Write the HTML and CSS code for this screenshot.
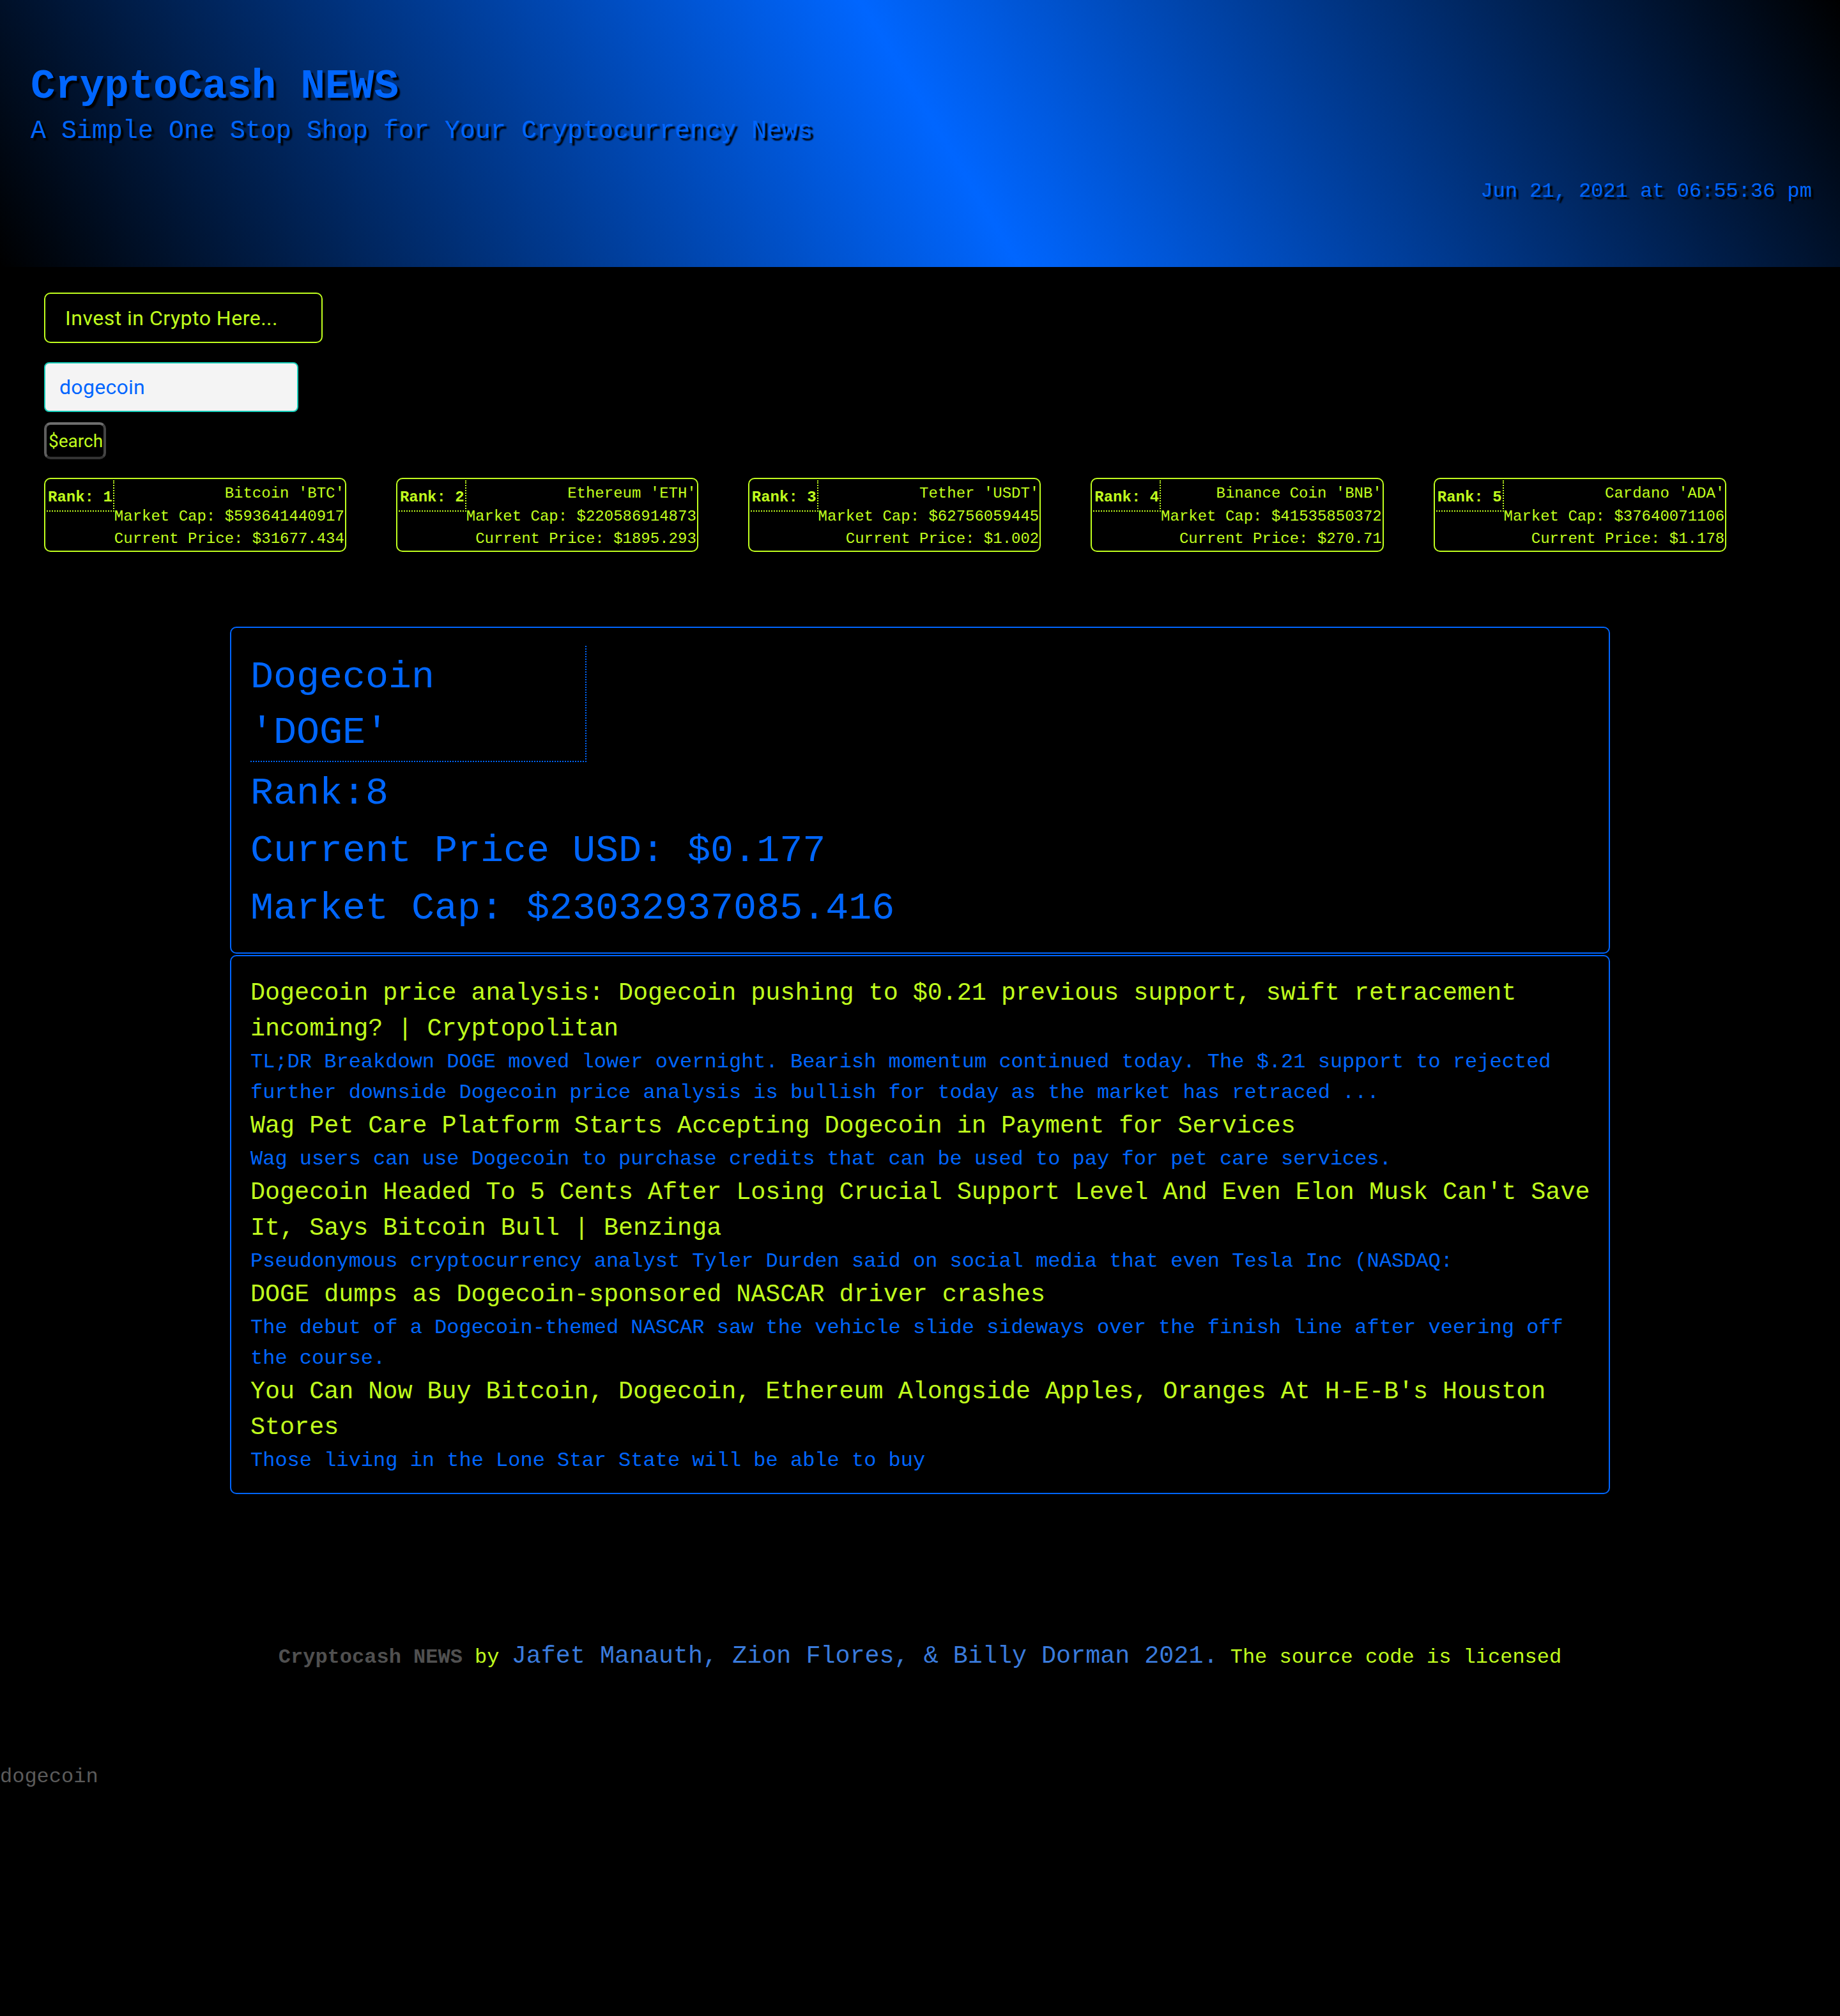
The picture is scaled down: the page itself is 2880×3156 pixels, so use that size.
FILE: index.html
```html
<!DOCTYPE html>
<html lang="en">
<head>
<meta charset="utf-8">
<title>CryptoCash NEWS</title>
<link rel="stylesheet" href="styles.css">
</head>
<body>
<header class="hero">
  <h1 class="hero-title">CryptoCash NEWS</h1>
  <p class="hero-tagline">A Simple One Stop Shop for Your Cryptocurrency News</p>
  <p class="hero-clock">Jun 21, 2021 at 06:55:36 pm</p>
</header>

<main class="main">
  <section class="controls">
    <a class="invest-link">Invest in Crypto Here...</a>
    <input class="search-input" type="text" value="dogecoin">
    <button class="search-btn">$earch</button>
  </section>

  <section class="top-coins">
    <div class="coin-card">
      <div class="coin-rank">Rank: 1</div>
      <div class="coin-info"><span>Bitcoin 'BTC'</span><span>Market Cap: $593641440917</span><span>Current Price: $31677.434</span></div>
    </div>
    <div class="coin-card">
      <div class="coin-rank">Rank: 2</div>
      <div class="coin-info"><span>Ethereum 'ETH'</span><span>Market Cap: $220586914873</span><span>Current Price: $1895.293</span></div>
    </div>
    <div class="coin-card">
      <div class="coin-rank">Rank: 3</div>
      <div class="coin-info"><span>Tether 'USDT'</span><span>Market Cap: $62756059445</span><span>Current Price: $1.002</span></div>
    </div>
    <div class="coin-card">
      <div class="coin-rank">Rank: 4</div>
      <div class="coin-info"><span>Binance Coin 'BNB'</span><span>Market Cap: $41535850372</span><span>Current Price: $270.71</span></div>
    </div>
    <div class="coin-card">
      <div class="coin-rank">Rank: 5</div>
      <div class="coin-info"><span>Cardano 'ADA'</span><span>Market Cap: $37640071106</span><span>Current Price: $1.178</span></div>
    </div>
  </section>

  <section class="coin-detail">
    <div class="coin-name">Dogecoin 'DOGE'</div>
    <div class="coin-lines">
      <p class="coin-line">Rank:8</p>
      <p class="coin-line">Current Price USD: $0.177</p>
      <p class="coin-line">Market Cap: $23032937085.416</p>
    </div>
  </section>

  <section class="news">
    <a class="news-title">Dogecoin price analysis: Dogecoin pushing to $0.21 previous support, swift retracement incoming? | Cryptopolitan</a>
    <p class="news-desc">TL;DR Breakdown DOGE moved lower overnight. Bearish momentum continued today. The $.21 support to rejected further downside Dogecoin price analysis is bullish for today as the market has retraced ...</p>
    <a class="news-title">Wag Pet Care Platform Starts Accepting Dogecoin in Payment for Services</a>
    <p class="news-desc">Wag users can use Dogecoin to purchase credits that can be used to pay for pet care services.</p>
    <a class="news-title">Dogecoin Headed To 5 Cents After Losing Crucial Support Level And Even Elon Musk Can't Save It, Says Bitcoin Bull | Benzinga</a>
    <p class="news-desc">Pseudonymous cryptocurrency analyst Tyler Durden said on social media that even Tesla Inc (NASDAQ:</p>
    <a class="news-title">DOGE dumps as Dogecoin-sponsored NASCAR driver crashes</a>
    <p class="news-desc">The debut of a Dogecoin-themed NASCAR saw the vehicle slide sideways over the finish line after veering off the course.</p>
    <a class="news-title">You Can Now Buy Bitcoin, Dogecoin, Ethereum Alongside Apples, Oranges At H&#8209;E&#8209;B's Houston Stores</a>
    <p class="news-desc">Those living in the Lone Star State will be able to buy</p>
  </section>
</main>

<footer class="footer">
  <p class="footer-text"><strong class="footer-brand">Cryptocash NEWS</strong> by <a class="footer-authors">Jafet Manauth, Zion Flores, &amp; Billy Dorman 2021.</a> The source code is licensed</p>
</footer>

<p class="saved-search">dogecoin</p>
</body>
</html>
```

FILE: styles.css
```css
html {
  background: #000;
}

body {
  margin: 0;
  background: #000;
  color: #c0ff1e;
  font-family: "Liberation Mono", "Courier New", monospace;
  font-size: 32px;
  line-height: 1.5;
}

/* ---------- header ---------- */
.hero {
  height: 418px;
  box-sizing: border-box;
  padding: 100px 44px 0 48px;
  background: linear-gradient(59deg, #000 0%, #0066ff 51%, #000 100%);
  color: #0066ff;
  text-shadow: 4px 4px 2px #000;
}

.hero-title {
  margin: 0;
  font-size: 64px;
  font-weight: bold;
  line-height: normal;
}

.hero-tagline {
  margin: 11px 0 0;
  font-size: 40px;
  line-height: normal;
}

.hero-clock {
  margin: 53px 0 0;
  font-size: 32px;
  line-height: normal;
  text-align: right;
}

/* ---------- controls ---------- */
.controls {
  display: flex;
  flex-direction: column;
  align-items: flex-start;
  padding: 40px 0 0 69px;
  font-family: Roboto, "Liberation Sans", sans-serif;
}

.invest-link {
  display: block;
  box-sizing: border-box;
  width: 436px;
  height: 79px;
  padding-left: 31px;
  border: 2px solid #c0ff1e;
  border-radius: 10px;
  color: #c0ff1e;
  font-size: 32px;
  letter-spacing: 0.5px;
  line-height: 77px;
}

.search-input {
  box-sizing: border-box;
  width: 398px;
  height: 78px;
  margin-top: 30px;
  padding: 0 0 0 22px;
  border: 2px solid #17cdb9;
  border-radius: 8px;
  background: #f4f4f4;
  color: #0066ff;
  font-family: Roboto, "Liberation Sans", sans-serif;
  font-size: 32px;
  letter-spacing: 0.3px;
  outline: none;
}

.search-btn {
  box-sizing: border-box;
  width: 97px;
  height: 58px;
  margin-top: 16px;
  padding: 0 0 0 2px;
  border: 4px solid;
  border-color: #6e6e6e #444 #333 #5e5e5e;
  border-radius: 10px;
  background: #000;
  color: #c0ff1e;
  font-family: Roboto, "Liberation Sans", sans-serif;
  font-size: 28px;
}

/* ---------- top coins ---------- */
.top-coins {
  display: flex;
  align-items: flex-start;
  gap: 78px;
  padding: 29px 0 0 69px;
}

.coin-card {
  display: flex;
  align-items: flex-start;
  padding: 0 0 0 2px;
  border: 2px solid #c0ff1e;
  border-radius: 10px;
  font-size: 24px;
}

.coin-rank {
  height: 41px;
  margin-top: 2px;
  padding: 6px 1px 0 2px;
  border-right: 2px dotted #c0ff1e;
  border-bottom: 2px dotted #c0ff1e;
  font-weight: bold;
  line-height: 41px;
  white-space: nowrap;
}

.coin-info {
  display: flex;
  flex-direction: column;
  align-items: flex-end;
  padding: 5px 1px 0 0;
  line-height: 35.5px;
  white-space: nowrap;
}

/* ---------- coin detail ---------- */
.coin-detail {
  box-sizing: border-box;
  width: 75%;
  margin: 117px auto 0;
  padding: 28px 30px 24px;
  border: 2px solid #0066ff;
  border-radius: 10px;
  color: #0066ff;
  font-size: 60px;
  line-height: 90px;
}

.coin-name {
  width: 25%;
  padding-top: 6px;
  border-right: 2px dotted #0066ff;
  border-bottom: 2px dotted #0066ff;
  line-height: 87px;
}

.coin-lines {
  padding-top: 4px;
}

.coin-line {
  margin: 0;
}

/* ---------- news ---------- */
.news {
  box-sizing: border-box;
  width: 75%;
  margin: 2px auto 0;
  padding: 30px 26px 26px 30px;
  border: 2px solid #0066ff;
  border-radius: 10px;
}

.news-title {
  display: block;
  color: #c0ff1e;
  font-size: 38.4px;
  line-height: 56px;
}

.news-desc {
  margin: 0;
  color: #0066ff;
  font-size: 32px;
  line-height: 48px;
}

/* ---------- footer ---------- */
.footer {
  padding-top: 226px;
  text-align: center;
}

.footer-text {
  margin: 0;
  color: #c0ff1e;
}

.footer-brand {
  color: #505050;
}

.footer-authors {
  color: #3a7bdc;
  font-size: 38.4px;
}

.saved-search {
  margin: 136px 0 0;
  color: #5b5b5b;
  font-size: 32px;
  line-height: 48px;
}
```
